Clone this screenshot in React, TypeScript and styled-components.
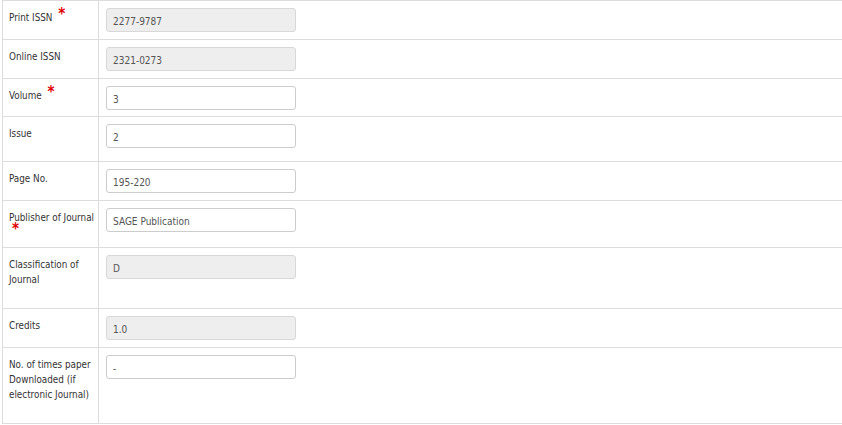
import React from "react";
import styled, {createGlobalStyle} from "styled-components";

type Field = {
    label: string
    value: string
    required?: boolean
    readOnly?: boolean
    height: number
}

const fields: Field[] = [
    {label: 'Print ISSN', value: '2277-9787', required: true, readOnly: true, height: 39},
    {label: 'Online ISSN', value: '2321-0273', readOnly: true, height: 39},
    {label: 'Volume', value: '3', required: true, height: 38},
    {label: 'Issue', value: '2', height: 45},
    {label: 'Page No.', value: '195-220', height: 39},
    {label: 'Publisher of Journal', value: 'SAGE Publication', required: true, height: 47},
    {label: 'Classification of Journal', value: 'D', readOnly: true, height: 61},
    {label: 'Credits', value: '1.0', readOnly: true, height: 39},
    {label: 'No. of times paper Downloaded (if electronic Journal)', value: '-', height: 76},
]

const GlobalStyle = createGlobalStyle`
  body {
    margin: 0;
    background: #ffffff;
    font-family: "DejaVu Sans Condensed", "DejaVu Sans", sans-serif;
  }
`

const Table = styled.div`
  margin-left: 2px;
  border-top: 1px solid #dddddd;
  border-left: 1px solid #dddddd;
`

const Row = styled.div<{ $h: number }>`
  display: grid;
  grid-template-columns: 96px 1fr;
  height: ${p => p.$h}px;
  border-bottom: 1px solid #dddddd;
  box-sizing: border-box;
`

const LabelCell = styled.div`
  padding: 9px 0 0 6px;
  border-right: 1px solid #dddddd;
  font-size: 9.8px;
  line-height: 15px;
  color: #333333;
`

const Star = styled.span`
  color: #e00000;
  font-size: 15px;
  font-weight: bold;
  line-height: 0;
  margin-left: 3px;
  position: relative;
  top: -2px;
`

const InputCell = styled.div`
  padding: 7px 7px 0 7px;
`

const TextBox = styled.input<{ $readOnly?: boolean }>`
  display: block;
  box-sizing: border-box;
  width: 190px;
  height: 24px;
  padding: 2px 6px 0;
  border: 1px solid ${p => p.$readOnly ? '#d8d8d8' : '#cccccc'};
  border-radius: 3px;
  background: ${p => p.$readOnly ? '#eeeeee' : '#ffffff'};
  color: #555555;
  font-family: "DejaVu Sans Condensed", "DejaVu Sans", sans-serif;
  font-size: 10px;
  outline: none;
`

function App() {
    return (
        <>
            <GlobalStyle/>
            <Table>
                {fields.map((f, index) => (
                    <Row $h={f.height} key={index}>
                        <LabelCell>
                            {f.label}
                            {f.required && <>{' '}<Star>*</Star></>}
                        </LabelCell>
                        <InputCell>
                            <TextBox value={f.value} readOnly $readOnly={f.readOnly}/>
                        </InputCell>
                    </Row>
                ))}
            </Table>
        </>
    )
}

export default App
